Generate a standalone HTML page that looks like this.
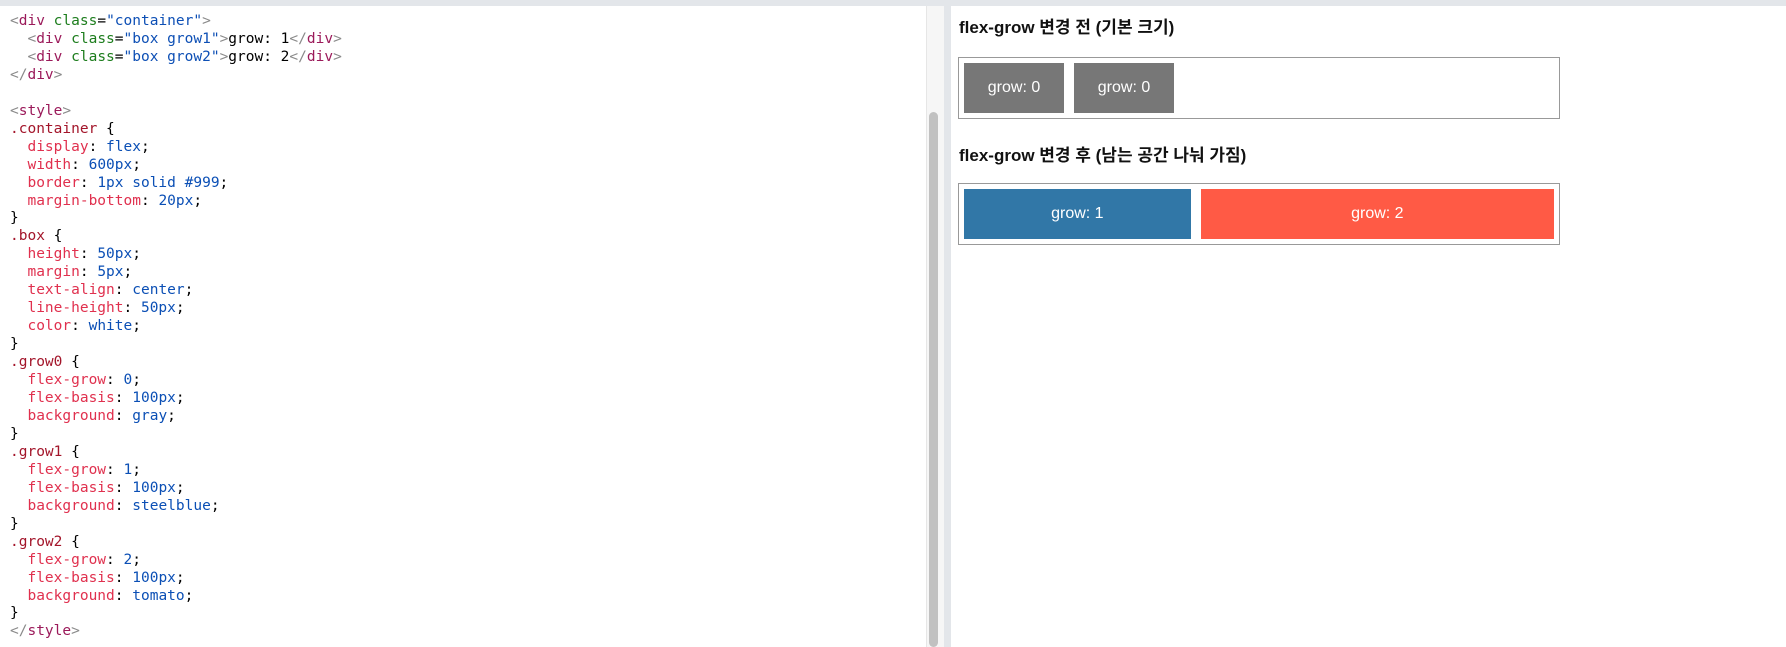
<!DOCTYPE html>
<html><head><meta charset="utf-8"><style>
html,body{margin:0;padding:0;width:1786px;height:647px;overflow:hidden;background:#fff;}
.topbar{position:absolute;left:0;top:0;width:1786px;height:6px;background:#e3e6ea;}
.left{position:absolute;left:0;top:6px;width:926px;height:641px;background:#fff;}
pre{margin:0;position:absolute;left:10px;top:7px;font-family:"DejaVu Sans Mono","Liberation Mono",monospace;font-size:14.5px;line-height:17.95px;color:#000;}
.b{color:#8a8a8a}.t{color:#9b1a5a}.a{color:#1d7d1d}.s{color:#0d4fb5}.sel{color:#a3152a}.p{color:#e0304e}.v{color:#0b4fb5}
.sb{position:absolute;left:926px;top:6px;width:18px;height:641px;background:#f6f6f6;border-left:1px solid #e6e6e6;}
.thumb{position:absolute;left:929px;top:112px;width:9px;height:535px;background:#c1c1c1;border-radius:5px;}
.div{position:absolute;left:944px;top:6px;width:7px;height:641px;background:#e3e6ea;}
.right{position:absolute;left:951px;top:6px;right:0;bottom:0;font-family:"Liberation Sans","Noto Sans CJK KR",sans-serif;}
h3{position:absolute;left:8px;margin:0;font-size:17px;font-weight:bold;color:#111;}
.c{position:absolute;left:7px;width:600px;border:1px solid #999;display:flex;}
.box{height:50px;margin:5px;text-align:center;line-height:50px;color:#fff;font-size:16px;flex-basis:100px;}
</style></head><body>
<div class="topbar"></div>
<div class="left"><pre><span class="b">&lt;</span><span class="t">div</span> <span class="a">class</span>=<span class="s">"container"</span><span class="b">&gt;</span>
  <span class="b">&lt;</span><span class="t">div</span> <span class="a">class</span>=<span class="s">"box grow1"</span><span class="b">&gt;</span>grow: 1<span class="b">&lt;/</span><span class="t">div</span><span class="b">&gt;</span>
  <span class="b">&lt;</span><span class="t">div</span> <span class="a">class</span>=<span class="s">"box grow2"</span><span class="b">&gt;</span>grow: 2<span class="b">&lt;/</span><span class="t">div</span><span class="b">&gt;</span>
<span class="b">&lt;/</span><span class="t">div</span><span class="b">&gt;</span>

<span class="b">&lt;</span><span class="t">style</span><span class="b">&gt;</span>
<span class="sel">.container</span> {
  <span class="p">display</span>: <span class="v">flex</span>;
  <span class="p">width</span>: <span class="v">600px</span>;
  <span class="p">border</span>: <span class="v">1px solid #999</span>;
  <span class="p">margin-bottom</span>: <span class="v">20px</span>;
}
<span class="sel">.box</span> {
  <span class="p">height</span>: <span class="v">50px</span>;
  <span class="p">margin</span>: <span class="v">5px</span>;
  <span class="p">text-align</span>: <span class="v">center</span>;
  <span class="p">line-height</span>: <span class="v">50px</span>;
  <span class="p">color</span>: <span class="v">white</span>;
}
<span class="sel">.grow0</span> {
  <span class="p">flex-grow</span>: <span class="v">0</span>;
  <span class="p">flex-basis</span>: <span class="v">100px</span>;
  <span class="p">background</span>: <span class="v">gray</span>;
}
<span class="sel">.grow1</span> {
  <span class="p">flex-grow</span>: <span class="v">1</span>;
  <span class="p">flex-basis</span>: <span class="v">100px</span>;
  <span class="p">background</span>: <span class="v">steelblue</span>;
}
<span class="sel">.grow2</span> {
  <span class="p">flex-grow</span>: <span class="v">2</span>;
  <span class="p">flex-basis</span>: <span class="v">100px</span>;
  <span class="p">background</span>: <span class="v">tomato</span>;
}
<span class="b">&lt;/</span><span class="t">style</span><span class="b">&gt;</span></pre></div>
<div class="sb"></div><div class="thumb"></div>
<div class="div"></div>
<div class="right">
<h3 style="top:7px">flex-grow 변경 전 (기본 크기)</h3>
<div class="c" style="top:51px"><div class="box" style="background:#777">grow: 0</div><div class="box" style="background:#777">grow: 0</div></div>
<div class="c" style="top:177px"><div class="box" style="background:#3177a7;flex-grow:1">grow: 1</div><div class="box" style="background:#ff5a45;flex-grow:2">grow: 2</div></div>
<h3 style="top:135px">flex-grow 변경 후 (남는 공간 나눠 가짐)</h3>
</div>
</body></html>
